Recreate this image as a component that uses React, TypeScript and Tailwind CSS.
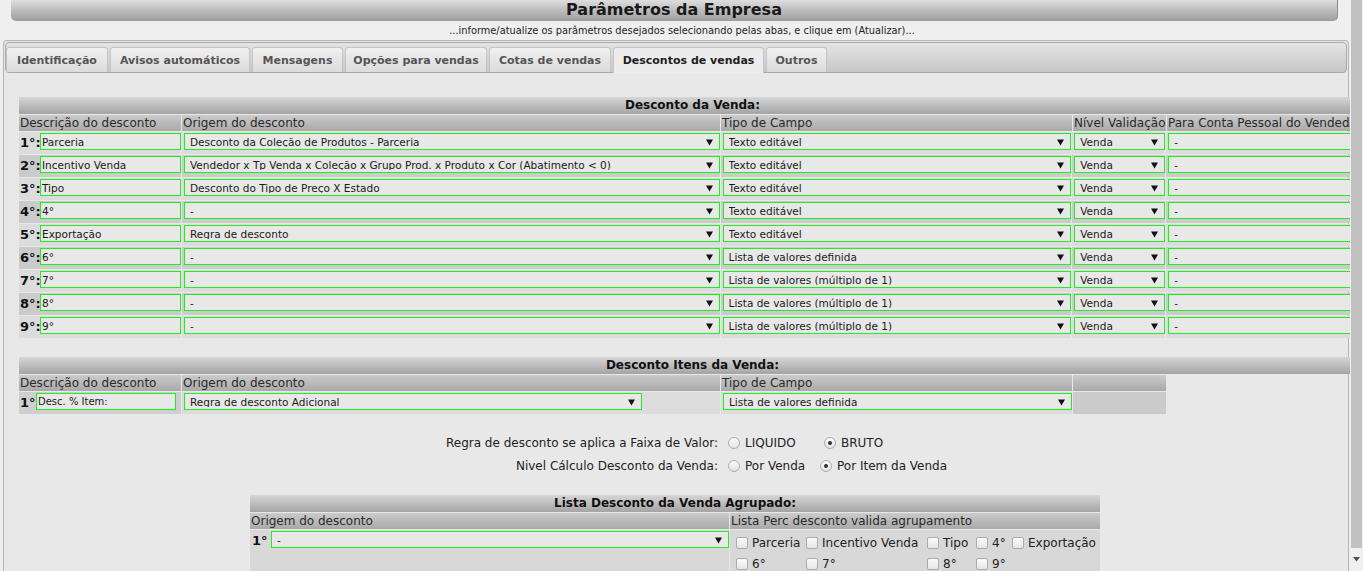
import React from 'react';

const rowsVenda = [
  { n: '1°', desc: 'Parceria', orig: 'Desconto da Coleção de Produtos - Parceria', tipo: 'Texto editável' },
  { n: '2°', desc: 'Incentivo Venda', orig: 'Vendedor x Tp Venda x Coleção x Grupo Prod. x Produto x Cor (Abatimento < 0)', tipo: 'Texto editável' },
  { n: '3°', desc: 'Tipo', orig: 'Desconto do Tipo de Preço X Estado', tipo: 'Texto editável' },
  { n: '4°', desc: '4°', orig: '-', tipo: 'Texto editável' },
  { n: '5°', desc: 'Exportação', orig: 'Regra de desconto', tipo: 'Texto editável' },
  { n: '6°', desc: '6°', orig: '-', tipo: 'Lista de valores definida' },
  { n: '7°', desc: '7°', orig: '-', tipo: 'Lista de valores (múltiplo de 1)' },
  { n: '8°', desc: '8°', orig: '-', tipo: 'Lista de valores (múltiplo de 1)' },
  { n: '9°', desc: '9°', orig: '-', tipo: 'Lista de valores (múltiplo de 1)' },
];

const tabs = [
  { label: 'Identificação', w: 'w-[102px]' },
  { label: 'Avisos automáticos', w: 'w-[140px]' },
  { label: 'Mensagens', w: 'w-[91px]' },
  { label: 'Opções para vendas', w: 'w-[142px]' },
  { label: 'Cotas de vendas', w: 'w-[122px]' },
  { label: 'Descontos de vendas', w: 'w-[151px]', active: true },
  { label: 'Outros', w: 'w-[61px]' },
];

function Arrow() {
  return (
    <svg width="7" height="7" viewBox="0 0 7 7" className="ml-auto shrink-0">
      <path d="M0 0.5h7L3.5 6.5z" fill="#111" />
    </svg>
  );
}

function Sel({ value, className = '', arrow = true }: { value: string; className?: string; arrow?: boolean }) {
  return (
    <div className={`flex h-[17px] items-center border border-[#1ef01e] bg-[#e8e8e8] pl-[5px] pr-[6px] pt-[1px] text-[10.5px] leading-none text-[#1a1a1a] ${className}`}>
      <span className="truncate">{value}</span>
      {arrow && <Arrow />}
    </div>
  );
}

function Txt({ value, className = '' }: { value: string; className?: string }) {
  return (
    <div className={`flex h-[17px] items-center border border-[#1ef01e] bg-[#e8e8e8] pl-[1px] pt-[1px] text-[10.5px] leading-none text-[#1a1a1a] ${className}`}>
      {value}
    </div>
  );
}

function TitleBar({ text }: { text: string }) {
  return (
    <div className="h-[17px] bg-gradient-to-b from-[#d6d6d6] to-[#a4a4a4] text-center text-[12px] font-bold leading-[17px] text-[#111]">
      {text}
    </div>
  );
}

function Head({ children, className = '' }: { children?: React.ReactNode; className?: string }) {
  return (
    <div className={`h-[16px] shrink-0 overflow-hidden whitespace-nowrap bg-gradient-to-b from-[#cbcbcb] to-[#a9a9a9] pl-[1px] text-[12px] leading-[16px] text-[#2a2a2a] ${className}`}>
      {children}
    </div>
  );
}

function Check({ label }: { label: string }) {
  return (
    <div className="flex items-center gap-[4px]">
      <span className="h-[12px] w-[12px] shrink-0 rounded-[2px] border border-[#ababab] bg-gradient-to-b from-[#fbfbfb] to-[#e6e6e6]" />
      <span className="text-[12px] leading-none text-[#222]">{label}</span>
    </div>
  );
}

function Radio({ label, checked }: { label: string; checked?: boolean }) {
  return (
    <div className="flex items-center gap-[5px]">
      <span className="flex h-[12px] w-[12px] items-center justify-center rounded-full border border-[#acacac] bg-gradient-to-b from-[#fbfbfb] to-[#e4e4e4]">
        {checked && <span className="h-[4px] w-[4px] rounded-full bg-[#333]" />}
      </span>
      <span className="text-[12px] leading-none text-[#222]">{label}</span>
    </div>
  );
}

export default function App() {
  return (
    <div className="flex h-[571px] w-[1363px] overflow-hidden bg-[#efefef] text-[#222] [font-family:'DejaVu_Sans',sans-serif]">
      <div className="w-[1350px] shrink-0 overflow-hidden">
        {/* page title */}
        <div className="ml-[11px] h-[21px] w-[1327px] rounded-b-[5px] border-r border-[#8c8c8c] bg-gradient-to-b from-[#dedede] to-[#9d9d9d] text-center text-[16px] font-bold leading-[20px] text-[#1a1a1a]">
          Parâmetros da Empresa
        </div>
        <div className="mt-[4px] h-[12px] pl-[14px] text-center text-[9.8px] leading-[12px] text-[#222]">
          ...informe/atualize os parâmetros desejados selecionando pelas abas, e clique em (Atualizar)...
        </div>

        {/* tabs panel */}
        <div className="ml-[3px] mt-[3px] w-[1346px] rounded-t-[4px] border border-b-0 border-[#b5b5b5] bg-[#e8e8e8] px-[1px] pt-[1px]">
          <div className="flex h-[31px] items-end gap-[2px] rounded-[4px] border border-[#a9a9a9] bg-gradient-to-b from-[#e4e4e4] to-[#c7c7c7]">
            {tabs.map((t) => (
              <div
                key={t.label}
                className={`${t.w} flex shrink-0 items-center justify-center rounded-t-[3px] border border-b-0 border-[#c4c4c4] pt-[2px] text-[11px] font-bold ${
                  t.active ? 'relative top-[1px] h-[26px] bg-[#ececec] text-[#1e1e1e]' : 'h-[25px] bg-gradient-to-b from-[#f0f0f0] to-[#dcdcdc] text-[#555]'
                }`}
              >
                {t.label}
              </div>
            ))}
          </div>

          {/* tab content */}
          <div className="pl-[14px] pt-[24px]">
            {/* Desconto da Venda */}
            <div className="flex w-[1347px] flex-col gap-[1px]">
              <TitleBar text="Desconto da Venda:" />
              <div className="flex gap-[1px]">
                <Head className="w-[162px]">Descrição do desconto</Head>
                <Head className="w-[538px]">Origem do desconto</Head>
                <Head className="w-[351px]">Tipo de Campo</Head>
                <Head className="w-[93px]">Nível Validação</Head>
                <Head className="w-[200px]">Para Conta Pessoal do Vendedor</Head>
              </div>
              {rowsVenda.map((r, i) => {
                const bg = i % 2 === 0 ? 'bg-[#dcdcdc]' : 'bg-[#cbcbcb]';
                return (
                  <div key={r.n} className="flex h-[22px] gap-[1px]">
                    <div className={`flex w-[162px] items-start gap-[1px] pl-[1px] pt-[1px] ${bg}`}>
                      <span className="w-[19px] text-[13px] font-bold leading-[19px] text-[#111]">{r.n}:</span>
                      <Txt value={r.desc} className="w-[141px]" />
                    </div>
                    <div className={`w-[538px] pl-[2px] pt-[1px] ${bg}`}>
                      <Sel value={r.orig} />
                    </div>
                    <div className={`w-[351px] pl-[2px] pt-[1px] ${bg}`}>
                      <Sel value={r.tipo} />
                    </div>
                    <div className={`w-[93px] pl-[2px] pt-[1px] ${bg}`}>
                      <Sel value="Venda" />
                    </div>
                    <div className={`w-[200px] pl-[2px] pt-[1px] ${bg}`}>
                      <Sel value="-" arrow={false} />
                    </div>
                  </div>
                );
              })}
            </div>

            {/* Desconto Itens da Venda */}
            <div className="mt-[19px] flex w-[1347px] flex-col gap-[1px]">
              <TitleBar text="Desconto Itens da Venda:" />
              <div className="flex gap-[1px]">
                <Head className="w-[162px]">Descrição do desconto</Head>
                <Head className="w-[538px]">Origem do desconto</Head>
                <Head className="w-[351px]">Tipo de Campo</Head>
                <Head className="w-[93px]" />
              </div>
              <div className="flex h-[22px] gap-[1px]">
                <div className="flex w-[162px] items-start gap-[1px] bg-[#cfcfcf] pl-[1px] pt-[1px]">
                  <span className="w-[15px] text-[13px] font-bold leading-[19px] text-[#111]">1°</span>
                  <Txt value="Desc. % Item:" className="w-[140px] text-[10px]" />
                </div>
                <div className="w-[538px] bg-[#dcdcdc] pl-[2px] pt-[1px]">
                  <Sel value="Regra de desconto Adicional" className="w-[458px]" />
                </div>
                <div className="w-[351px] bg-[#dcdcdc] pl-[2px] pt-[1px]">
                  <Sel value="Lista de valores definida" />
                </div>
                <div className="w-[93px] bg-[#cbcbcb]" />
              </div>
            </div>

            {/* radios */}
            <div className="mt-[17px] flex flex-col">
              <div className="flex h-[23px] items-center">
                <div className="w-[709px] pr-[10px] text-right text-[12px] text-[#222]">Regra de desconto se aplica a Faixa de Valor:</div>
                <div className="w-[96px]"><Radio label="LIQUIDO" /></div>
                <Radio label="BRUTO" checked />
              </div>
              <div className="flex h-[23px] items-center">
                <div className="w-[709px] pr-[10px] text-right text-[12px] text-[#222]">Nivel Cálculo Desconto da Venda:</div>
                <div className="w-[92px]"><Radio label="Por Venda" /></div>
                <Radio label="Por Item da Venda" checked />
              </div>
            </div>

            {/* Lista Desconto da Venda Agrupado */}
            <div className="ml-[231px] mt-[18px] flex w-[850px] flex-col gap-[1px]">
              <TitleBar text="Lista Desconto da Venda Agrupado:" />
              <div className="flex gap-[1px]">
                <Head className="w-[479px]">Origem do desconto</Head>
                <Head className="w-[370px]">Lista Perc desconto valida agrupamento</Head>
              </div>
              <div className="flex h-[50px] gap-[1px]">
                <div className="flex w-[479px] items-start gap-[4px] bg-[#d8d8d8] pl-[2px] pt-[1px]">
                  <span className="w-[15px] text-[13px] font-bold leading-[19px] text-[#111]">1°</span>
                  <Sel value="-" className="w-[458px]" />
                </div>
                <div className="grid w-[370px] grid-cols-[70px_121px_49px_36px_auto] content-start gap-y-[9px] bg-[#d8d8d8] pl-[6px] pt-[7px]">
                  <Check label="Parceria" />
                  <Check label="Incentivo Venda" />
                  <Check label="Tipo" />
                  <Check label="4°" />
                  <Check label="Exportação" />
                  <Check label="6°" />
                  <Check label="7°" />
                  <Check label="8°" />
                  <Check label="9°" />
                </div>
              </div>
            </div>
          </div>
        </div>
      </div>

      {/* scrollbar */}
      <div className="flex w-[13px] flex-col bg-[#f0f0f0]">
        <div className="mx-[1px] h-[548px] bg-[#c1c1c1]" />
        <div className="flex flex-1 items-center justify-center">
          <svg width="7" height="5" viewBox="0 0 7 5">
            <path d="M0 0h7L3.5 4.5z" fill="#505050" />
          </svg>
        </div>
      </div>
    </div>
  );
}
